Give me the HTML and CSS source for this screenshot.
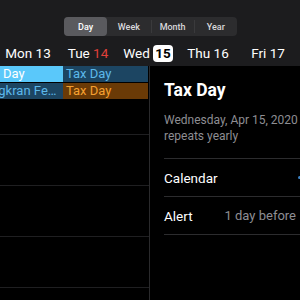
FILE: index.html
```html
<!DOCTYPE html>
<html lang="en">
<head>
    <meta charset="UTF-8">
    <title>Calendar</title>
    <link rel="stylesheet" href="styles.css">
</head>
<body>
    <div class="toolbar">
        <div class="segments">
            <div class="segment active">Day</div>
            <div class="segment">Week</div>
            <div class="segment">Month</div>
            <div class="segment">Year</div>
        </div>
        <div class="days">
            <div class="day">Mon 13</div>
            <div class="day">Tue <span class="holiday">14</span></div>
            <div class="day">Wed <span class="today">15</span></div>
            <div class="day">Thu 16</div>
            <div class="day">Fri 17</div>
        </div>
    </div>

    <div class="main">
        <div class="grid">
            <div class="events">
                <div class="event span-blue">Day</div>
                <div class="event blue">Tax Day</div>
                <div class="event blue shifted">Songkran Festival</div>
                <div class="event orange">Tax Day</div>
            </div>
            <div class="hours">
                <div class="hour"></div>
                <div class="hour"></div>
                <div class="hour"></div>
                <div class="hour"></div>
            </div>
        </div>

        <div class="detail">
            <h1 class="title">Tax Day</h1>
            <div class="meta">Wednesday, Apr 15, 2020</div>
            <div class="meta">repeats yearly</div>
            <div class="rows">
                <div class="row">
                    <span>Calendar</span>
                    <span class="dot"></span>
                </div>
                <div class="row">
                    <span class="label">Alert</span>
                    <span class="value">1 day before</span>
                </div>
            </div>
        </div>
    </div>
</body>
</html>
```

FILE: styles.css
```css
body {
    margin: 0;
    width: 300px;
    height: 300px;
    overflow: hidden;
    background: #000;
    color: #fff;
    font-family: 'Roboto', 'Liberation Sans', sans-serif;
}
.toolbar {
    height: 66px;
    background: #1c1c1e;
    padding-top: 17px;
    box-sizing: border-box;
}
.segments {
    display: grid;
    grid-template-columns: repeat(4, 1fr);
    width: 173px;
    height: 19px;
    margin-left: 64px;
    background: #2c2c2e;
    border-radius: 4px;
}
.segment {
    font-size: 9px;
    font-weight: 500;
    color: #d8d8da;
    display: flex;
    align-items: center;
    justify-content: center;
    border-left: 1px solid #3a3a3c;
    margin: 3px 0;
}
.segment:first-child,
.segment.active,
.segment.active + .segment {
    border-left: none;
}
.segment.active {
    margin: 0;
    background: #5a5a5e;
    border-radius: 4px;
    color: #fff;
}
.days {
    display: grid;
    grid-template-columns: repeat(5, 60px);
    margin-left: -2px;
    margin-top: 8px;
    font-size: 13.5px;
}
.day {
    text-align: center;
    line-height: 18px;
}
.holiday {
    color: #e0403a;
}
.today {
    display: inline-block;
    background: #fff;
    color: #000;
    font-weight: 700;
    border-radius: 4px;
    padding: 0 2px;
    line-height: 17px;
}
.main {
    display: flex;
    height: 234px;
}
.grid {
    width: 149px;
    border-right: 1px solid #2a2a2c;
}
.events {
    display: grid;
    grid-template-columns: 63px 85px;
    grid-auto-rows: 16px;
    row-gap: 1px;
    font-size: 13px;
    padding-bottom: 1px;
}
.event {
    padding-left: 3px;
    line-height: 16px;
    white-space: nowrap;
    overflow: hidden;
    text-overflow: ellipsis;
}
.event.shifted {
    padding-left: 0;
    text-indent: -24px;
}
.span-blue {
    background: #5ac8fa;
    color: #fff;
}
.blue {
    background: #1c4562;
    color: #5cb8ea;
}
.orange {
    background: #6a3a06;
    color: #f5a030;
}
.hour {
    height: 51px;
    border-bottom: 1px solid #1f1f21;
    box-sizing: border-box;
}
.hour:first-child {
    height: 35px;
}
.detail {
    flex: 1;
    padding-left: 14px;
}
.title {
    margin: 14px 0 12px;
    font-size: 17.5px;
    font-weight: 700;
}
.meta {
    font-size: 12px;
    color: #8e8e93;
    line-height: 16px;
    white-space: nowrap;
}
.rows {
    margin-top: 14px;
    border-top: 1px solid #2c2c2e;
}
.row {
    display: flex;
    align-items: center;
    justify-content: space-between;
    height: 37px;
    border-bottom: 1px solid #2c2c2e;
    font-size: 13.5px;
}
.value {
    color: #8e8e93;
    font-size: 13px;
    margin-right: 4px;
}
.dot {
    width: 3px;
    height: 3px;
    background: #3b82c4;
    border-radius: 50%;
    margin-right: -1px;
}
```
